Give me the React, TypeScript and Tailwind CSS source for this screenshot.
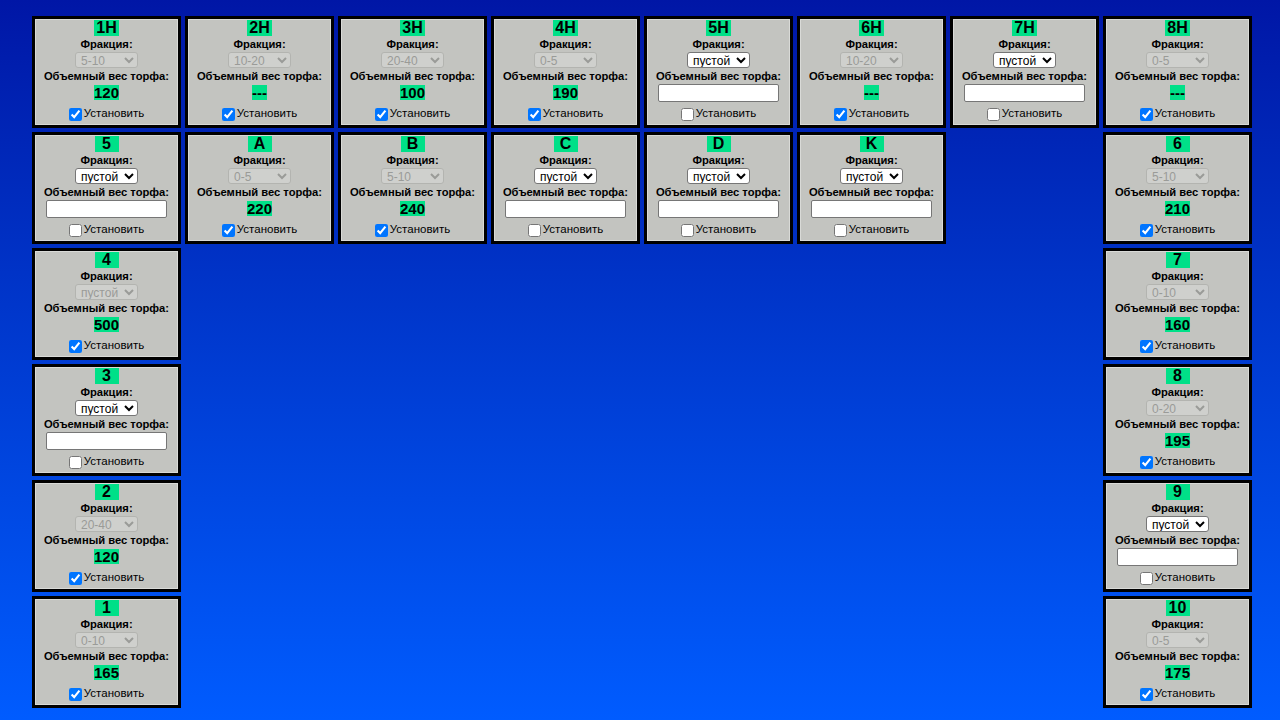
import React from "react";

type Cell = {
  t: string;
  f: string;
  v?: string;
  on: boolean;
};

const row1: Cell[] = [
  { t: "1H", f: "5-10", v: "120", on: true },
  { t: "2H", f: "10-20", v: "---", on: true },
  { t: "3H", f: "20-40", v: "100", on: true },
  { t: "4H", f: "0-5", v: "190", on: true },
  { t: "5H", f: "пустой", on: false },
  { t: "6H", f: "10-20", v: "---", on: true },
  { t: "7H", f: "пустой", on: false },
  { t: "8H", f: "0-5", v: "---", on: true },
];

const row2: (Cell | null)[] = [
  { t: "5", f: "пустой", on: false },
  { t: "A", f: "0-5", v: "220", on: true },
  { t: "B", f: "5-10", v: "240", on: true },
  { t: "C", f: "пустой", on: false },
  { t: "D", f: "пустой", on: false },
  { t: "K", f: "пустой", on: false },
  null,
  { t: "6", f: "5-10", v: "210", on: true },
];

const left: Cell[] = [
  { t: "4", f: "пустой", v: "500", on: true },
  { t: "3", f: "пустой", on: false },
  { t: "2", f: "20-40", v: "120", on: true },
  { t: "1", f: "0-10", v: "165", on: true },
];

const right: Cell[] = [
  { t: "7", f: "0-10", v: "160", on: true },
  { t: "8", f: "0-20", v: "195", on: true },
  { t: "9", f: "пустой", on: false },
  { t: "10", f: "0-5", v: "175", on: true },
];

function Card({ c }: { c: Cell }) {
  const dis = c.on;
  return (
    <div className="w-[149px] h-[112px] border-[3px] border-black bg-[#c3c4c0]">
      <div className="w-full h-full border border-[#d9dad7] flex flex-col items-center">
        <div className="h-[16px] flex items-center">
          <span className="bg-[#00e088] min-w-[24px] text-center px-[2px] text-[16px] leading-[16px] font-bold text-black">{c.t}</span>
        </div>
        <div className="h-[15px] flex items-center text-[11.2px] font-bold leading-[14px] text-black">Фракция:</div>
        <div className="h-[17px] flex items-center pt-[1px]">
          <select
            disabled={dis}
            defaultValue={c.f}
            className={
              "w-[63px] h-[16px] text-[12px] leading-[14px] rounded-[3px] border pl-[1px] " +
              (dis
                ? "bg-[#cfd0cd] border-[#b3b4b0] text-[#9a9b98]"
                : "bg-white border-[#767676] text-black")
            }
          >
            <option value={c.f}>{c.f}</option>
          </select>
        </div>
        <div className="h-[15px] flex items-center text-[11.2px] font-bold leading-[14px] text-black whitespace-nowrap">
          Объемный вес торфа:
        </div>
        <div className="h-[19px] flex items-center">
          {c.v !== undefined ? (
            <span className="bg-[#00e088] px-0 text-[15px] leading-[15px] font-bold text-black">{c.v}</span>
          ) : (
            <input
              type="text"
              className="w-[121px] h-[18px] bg-white border border-[#767676] rounded-[2px]"
            />
          )}
        </div>
        <div className="h-[16px] mt-[4px] flex items-center gap-[2px] text-[11.5px] text-black">
          <input type="checkbox" defaultChecked={c.on} className="w-[13px] h-[13px] m-0" />
          <span>Установить</span>
        </div>
      </div>
    </div>
  );
}

export default function App() {
  return (
    <div
      className="w-[1280px] h-[720px] overflow-hidden bg-gradient-to-b from-[#0016a6] to-[#005cff] pl-[32px] pt-[16px]"
      style={{ fontFamily: '"Liberation Sans", Arial, sans-serif' }}
    >
      <div className="grid grid-cols-[repeat(8,149px)] grid-rows-[repeat(6,112px)] gap-[4px]">
        {row1.map((c) => (
          <Card key={c.t} c={c} />
        ))}
        {row2.map((c, i) => (c ? <Card key={c.t + "r2"} c={c} /> : <div key={"e" + i} />))}
        {left.map((c, i) => (
          <React.Fragment key={"l" + i}>
            <Card c={c} />
            <div className="col-span-6" />
            <Card c={right[i]} />
          </React.Fragment>
        ))}
      </div>
    </div>
  );
}
